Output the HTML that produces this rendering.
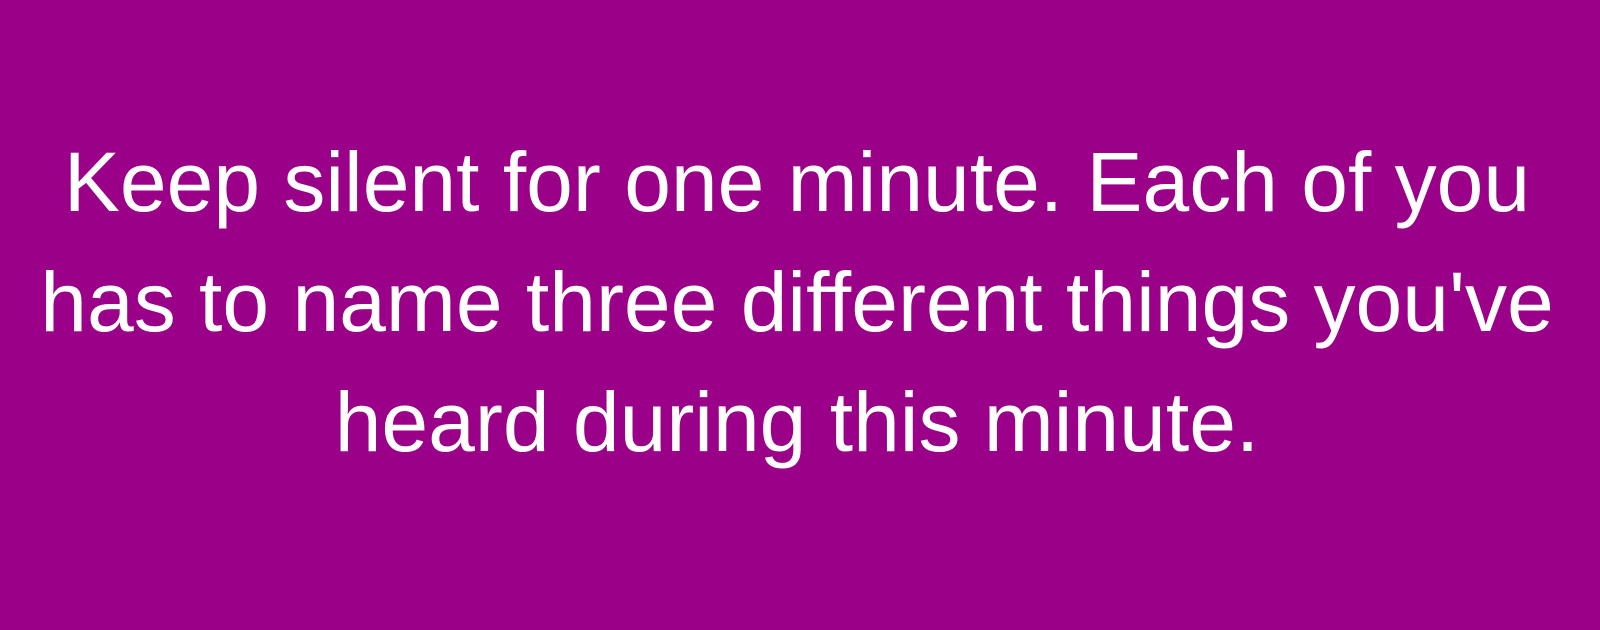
<!DOCTYPE html>
<html><head><style>
html,body{margin:0;padding:0}
body{width:1600px;height:630px;background:#9b0088;overflow:hidden;position:relative}
.t{position:absolute;left:-3px;top:122px;width:1600px;text-align:center;color:#fff;font-family:"Liberation Sans",sans-serif;font-size:84px;line-height:120px}
</style></head><body>
<div class="t">Keep silent for one minute. Each of you<br>has to name three different things you've<br>heard during this minute.</div>
</body></html>
